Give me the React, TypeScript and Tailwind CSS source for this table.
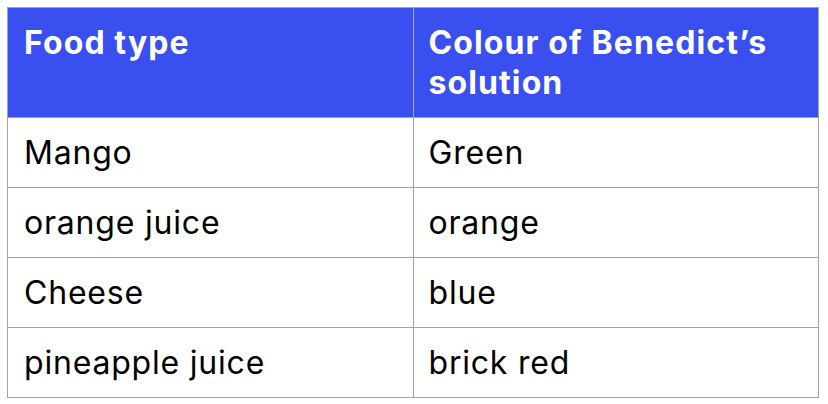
const rows = [
  ["Mango", "Green"],
  ["orange juice", "orange"],
  ["Cheese", "blue"],
  ["pineapple juice", "brick red"],
]

export default function App() {
  return (
    <div className="w-[828px] h-[404px] bg-white pl-[7px] pt-[7px] font-['Inter',sans-serif]">
      <table className="w-[812px] border-collapse table-fixed">
        <thead>
          <tr className="h-[110px] bg-[#3a4ff0]">
            <th className="border border-[#a3a3a3] align-top text-left pl-[16px] pt-[15px] text-[32px] leading-[40px] tracking-[1.1px] font-bold text-white">
              Food type
            </th>
            <th className="border border-[#a3a3a3] align-top text-left pl-[15px] pt-[15px] text-[32px] leading-[40px] tracking-[1.1px] font-bold text-white">
              Colour of Benedict’s solution
            </th>
          </tr>
        </thead>
        <tbody>
          {rows.map(([food, colour]) => (
            <tr key={food} className="h-[70px]">
              <td className="border border-[#a3a3a3] pl-[16px] text-[32px] leading-[40px] tracking-[0.8px] text-black">{food}</td>
              <td className="border border-[#a3a3a3] pl-[15px] text-[32px] leading-[40px] tracking-[0.8px] text-black">{colour}</td>
            </tr>
          ))}
        </tbody>
      </table>
    </div>
  )
}
